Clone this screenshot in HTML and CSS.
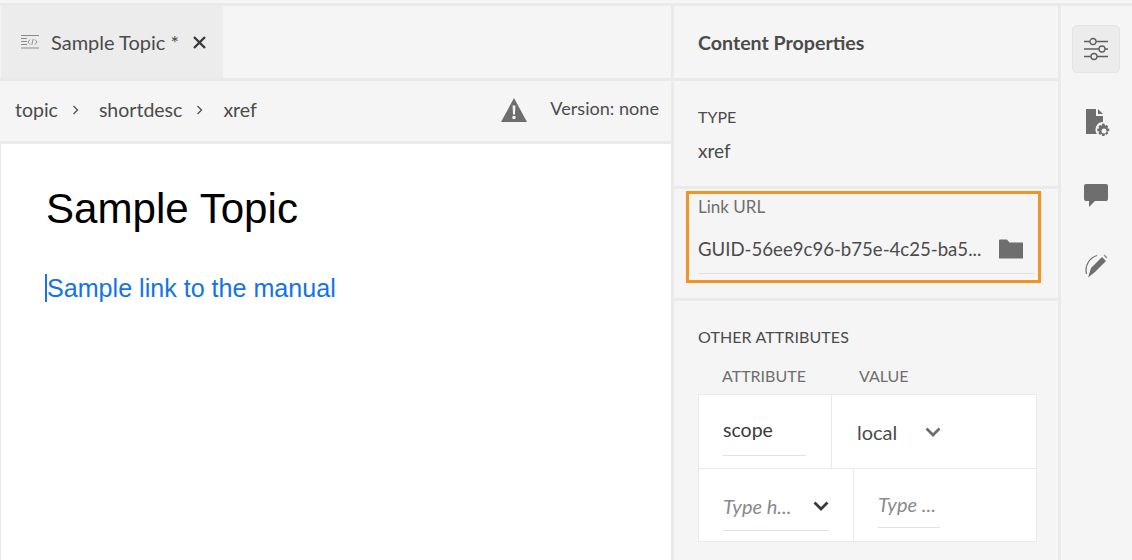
FILE: index.html
```html
<!DOCTYPE html>
<html lang="en">
<head>
<meta charset="utf-8">
<title>Sample Topic</title>
<link rel="stylesheet" href="styles.css">
</head>
<body>
<div class="app">
  <main class="editor">
    <div class="tabs">
      <div class="tab">
        <svg class="tab-icon" width="20" height="16" viewBox="0 0 20 16"><path d="M1 1.500h18M1 4.500h6M1 7.500h6M1 10.500h6M1 14h18" stroke="#8a8a8a" fill="none"/><path d="M10 5.500L8 8l2 2.500M15 5.500l2 2.500-2 2.500M13.200 5l-1.400 6" stroke="#8a8a8a" fill="none" stroke-width=".9"/></svg>
        <span class="tab-title">Sample Topic *</span>
        <svg class="tab-close" width="13" height="13" viewBox="0 0 13 13"><path d="M1 1l11 11M12 1L1 12" stroke="#3a3a3a" stroke-width="2.400" fill="none"/></svg>
      </div>
    </div>
    <div class="crumbs">
      <span class="crumb">topic</span>
      <svg class="sep" width="7" height="10" viewBox="0 0 7 10"><path d="M1.500 1l4 4-4 4" stroke="#555" stroke-width="1.400" fill="none"/></svg>
      <span class="crumb">shortdesc</span>
      <svg class="sep" width="7" height="10" viewBox="0 0 7 10"><path d="M1.500 1l4 4-4 4" stroke="#555" stroke-width="1.400" fill="none"/></svg>
      <span class="crumb">xref</span>
      <svg class="warn" width="28" height="26" viewBox="0 0 28 26"><path fill-rule="evenodd" d="M14 1L27 25H1zM12.600 8.500l.4 9h2l.4-9zM14 18.700a1.800 1.800 0 100 3.600 1.800 1.800 0 000-3.600z" fill="#6e6e6e"/></svg>
      <span class="version">Version: none</span>
    </div>
    <article class="doc">
      <h1 class="doc-title">Sample Topic</h1>
      <p class="doc-para"><a class="doc-link">Sample link to the manual</a></p>
    </article>
  </main>

  <aside class="props">
    <section class="p-head"><h2>Content Properties</h2></section>
    <section class="p-type">
      <div class="caps">TYPE</div>
      <div class="type-val">xref</div>
    </section>
    <section class="p-link">
      <div class="link-box">
        <div class="link-label">Link URL</div>
        <div class="link-row">
          <span class="link-val">GUID-56ee9c96-b75e-4c25-ba5...</span>
          <svg class="folder" width="26" height="22" viewBox="0 0 26 22"><path d="M1 2.500a1 1 0 011-1h7l2.500 3H25v16H1z" fill="#6e6e6e"/></svg>
        </div>
      </div>
    </section>
    <section class="p-other">
      <div class="caps wide">OTHER ATTRIBUTES</div>
      <div class="col-heads"><span class="ch-a">ATTRIBUTE</span><span>VALUE</span></div>
      <div class="attr-table">
        <div class="attr-row r1">
          <div class="cell c-scope"><div class="field scope">scope</div></div>
          <div class="cell c-local"><span>local</span>
            <svg width="16" height="10" viewBox="0 0 16 10"><path d="M1.500 1.500L8 8l6.500-6.500" stroke="#6e6e6e" stroke-width="2.800" fill="none"/></svg>
          </div>
        </div>
        <div class="attr-row r2">
          <div class="cell c-type1"><div class="field ph-sel"><i>Type h...</i>
            <svg width="16" height="10" viewBox="0 0 16 10"><path d="M1.500 1.500L8 8l6.500-6.500" stroke="#3a3a3a" stroke-width="2.800" fill="none"/></svg>
          </div></div>
          <div class="cell c-type2"><div class="field ph"><i>Type ...</i></div></div>
        </div>
      </div>
    </section>
  </aside>

  <nav class="rail">
    <div class="rail-btn active">
      <svg width="26" height="24" viewBox="0 0 26 24" fill="none" stroke="#5e5e5e" stroke-width="1.300"><path d="M1 4.500h6M13 4.500h12M1 12h15M22 12h3M1 19.500h7M14 19.500h11"/><circle cx="10" cy="4.500" r="3"/><circle cx="19" cy="12" r="3"/><circle cx="11" cy="19.500" r="3"/></svg>
    </div>
    <div class="rail-btn">
      <svg class="ic-file" width="26" height="28" viewBox="0 0 26 28"><path d="M1 1h10v7h7v6a7.500 7.500 0 00-6 12H1zM13 1l5 5h-5z" fill="#6e6e6e"/><path fill-rule="evenodd" d="M18 15.500l1.500.3.500 2 1.700-.8 1.500 1.500-.9 1.700 2 .6v2.200l-2 .5.900 1.800-1.500 1.500-1.700-.9-.6 2h-2.200l-.5-2-1.800.9-1.500-1.500.9-1.800-2-.5v-2.200l2-.6-.9-1.700 1.500-1.500 1.800.8.500-2zM19 20.500a2.500 2.500 0 100 5 2.500 2.500 0 000-5z" fill="#6e6e6e"/></svg>
    </div>
    <div class="rail-btn">
      <svg width="26" height="25" viewBox="0 0 26 25"><path d="M3 1h20a2 2 0 012 2v13a2 2 0 01-2 2H12l-6 6v-6H3a2 2 0 01-2-2V3a2 2 0 012-2z" fill="#6e6e6e"/></svg>
    </div>
    <div class="rail-btn rail-last">
      <svg width="26" height="24" viewBox="0 0 26 24"><path d="M5 23.500L8 14 19 3l4 4-11 11z" fill="#6e6e6e"/><path d="M20.500 1.500l1-1 3 3-1 1z" fill="#8a8a8a"/><path d="M14 1.500C6 4 1.500 12 3.500 20" stroke="#6e6e6e" stroke-width="1.200" fill="none"/></svg>
    </div>
  </nav>
</div>
</body>
</html>
```

FILE: styles.css
```css
* { box-sizing: border-box; }
html, body { margin: 0; height: 100%; }
body {
  background: linear-gradient(#f5f5f5 3px, #eaeaea 3px);
  font-family: "Lato", "Noto Sans", sans-serif;
  color: #4b4b4b;
  overflow: hidden;
}
.app {
  display: grid;
  grid-template-columns: 671px 384px 71px;
  column-gap: 3px;
  height: 560px;
  padding-top: 6px;
  align-items: stretch;
}
.editor { display: flex; flex-direction: column; gap: 3px; min-width: 0; }
.tabs { height: 72px; background: #f5f5f5; display: flex; padding-left: 1px; }
.tab {
  width: 222px;
  background: #ececec;
  display: flex;
  align-items: center;
  padding: 0 0 0 19px;
  font-size: 20px;
}
.tab-icon { margin-right: 11px; }
.tab-close { margin-left: 14px; }
.crumbs {
  height: 60px;
  background: #f5f5f5;
  display: flex;
  align-items: center;
  padding: 0 12px 3px 15px;
  font-size: 19.500px;
}
.sep { margin: 0 20px 0 14px; }
.warn { margin: 0 22px 0 auto; }
.version { font-size: 18.100px; margin-bottom: 3px; }
.doc { flex: 1; background: #fff; margin-left: 1px; padding: 40px 45px; }
.doc-title {
  margin: 0;
  font: 400 42.100px/50px "Liberation Sans", Arial, sans-serif;
  color: #000;
}
.doc-para { margin: 39px 0 0; font: 400 25.100px/30px "Liberation Sans", Arial, sans-serif; }
.doc-link { color: #1473e6; border-left: 2px solid #1473e6; margin-left: -1px; display: inline-block; line-height: 28px; }

.props { display: flex; flex-direction: column; gap: 3px; min-width: 0; }
.props section { background: #f5f5f5; }
.p-head { height: 72px; display: flex; align-items: center; padding: 0 0 0 24px; }
.p-head h2 { margin: 0; font-size: 19.600px; font-weight: 700; color: #4b4b4b; }
.p-type { height: 105px; padding: 26px 24px 0; }
.caps { font-size: 16px; line-height: 20px; color: #4b4b4b; }
.caps.wide { letter-spacing: .1px; }
.type-val { font-size: 19px; line-height: 24px; margin-top: 12px; }
.p-link { height: 109px; padding: 2px 18px 0 12px; }
.link-box { height: 92px; border: 3px solid #f29423; padding: 3px 0 0 9px; margin-right: -1px; }
.link-label { font-size: 17px; line-height: 20px; color: #6e6e6e; }
.link-row {
  display: flex;
  align-items: center;
  justify-content: space-between;
  height: 52px;
  margin: 5px 0 0;
  width: 336px;
  padding: 2px 10px 0 0;
  border-bottom: 1px solid #e1e1e1;
  font-size: 18.600px;
}
.folder { margin-top: 1px; }
.p-other { flex: 1; padding: 26px 21px 0 24px; }
.col-heads { display: flex; font-size: 16px; line-height: 20px; color: #6e6e6e; padding-left: 24px; margin-top: 19px; }
.ch-a { width: 137px; }
.attr-table { width: 339px; margin-top: 8px; background: #fff; border: 1px solid #eaeaea; }
.attr-row { display: flex; }
.r1 { height: 74px; border-bottom: 1px solid #eaeaea; }
.r2 { height: 72px; }
.cell { padding-left: 24px; }
.c-scope { width: 133px; border-right: 1px solid #eaeaea; padding-top: 23px; }
.c-local { flex: 1; display: flex; align-items: center; gap: 28px; padding: 0 0 0 25px; font-size: 20px; }
.field { font-size: 19.500px; }
.scope { width: 83px; height: 38px; border-bottom: 1px solid #e1e1e1; color: #3a3a3a; }
.c-type1 { width: 155px; border-right: 1px solid #eaeaea; padding-top: 24px; }
.c-type2 { flex: 1; padding-top: 23px; }
.ph-sel { display: flex; justify-content: space-between; align-items: center; width: 106px; height: 38px; padding-bottom: 11px; border-bottom: 1px solid #e1e1e1; color: #8a8a8a; font-size: 20px; }
.ph { width: 62px; height: 36px; border-bottom: 1px solid #e1e1e1; color: #8a8a8a; font-size: 20px; }
.rail { background: #f5f5f5; display: flex; flex-direction: column; align-items: center; padding-top: 19px; padding-right: 1px; gap: 25px; }
.rail-btn { width: 48px; height: 48px; display: flex; align-items: center; justify-content: center; border-radius: 5px; }
.rail-btn.active { background: #ececec; border: 1px solid #e4e4e4; }
.rail-last { margin-top: -2px; }
.ic-file { margin-left: 4px; }
```
